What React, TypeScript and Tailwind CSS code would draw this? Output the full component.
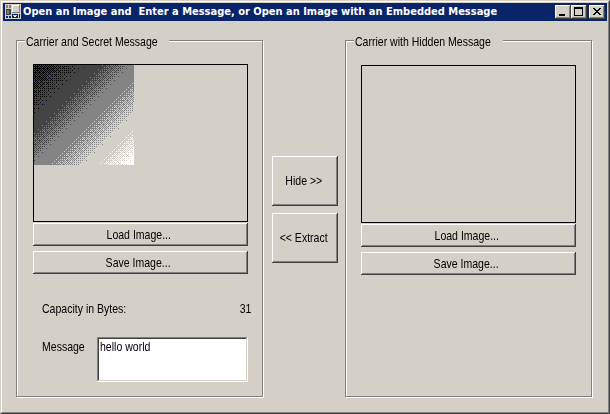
import { useEffect, useRef, type ReactNode } from 'react';

const RAISED =
  'flex shrink-0 items-center justify-center bg-[#d4d0c8] text-black shadow-[inset_-1px_-1px_0_#404040,inset_1px_1px_0_#ffffff,inset_-2px_-2px_0_#808080]';

const BAYER = [
  [0, 32, 8, 40, 2, 34, 10, 42],
  [48, 16, 56, 24, 50, 18, 58, 26],
  [12, 44, 4, 36, 14, 46, 6, 38],
  [60, 28, 52, 20, 62, 30, 54, 22],
  [3, 35, 11, 43, 1, 33, 9, 41],
  [51, 19, 59, 27, 49, 17, 57, 25],
  [15, 47, 7, 39, 13, 45, 5, 37],
  [63, 31, 55, 23, 61, 29, 53, 21],
];

const SHADES = ['#000000', '#444444', '#848484', '#d4d0c8', '#ffffff'];

// Distance along the diagonal where each blend to the next shade begins and ends.
const BLENDS = [
  [-14, 50],
  [66, 97],
  [112, 149],
  [161, 192],
];

const BLUE_DOTS = [
  [26, 0], [40, 0], [50, 2], [44, 6], [36, 6], [16, 11], [0, 15], [36, 14],
  [28, 18], [20, 22], [0, 26], [5, 34], [10, 39], [1, 48],
];

function GradientImage() {
  const ref = useRef<HTMLCanvasElement>(null);
  useEffect(() => {
    const ctx = ref.current?.getContext('2d');
    if (!ctx) return;
    for (let y = 0; y < 100; y++) {
      for (let x = 0; x < 100; x++) {
        const t = x + y;
        const threshold = (BAYER[y % 8][x % 8] + 0.5) / 64;
        let shade = 0;
        BLENDS.forEach(([from, to]) => {
          if ((t - from) / (to - from) > threshold) shade++;
        });
        ctx.fillStyle = SHADES[shade];
        ctx.fillRect(x, y, 1, 1);
      }
    }
    ctx.fillStyle = '#102a80';
    BLUE_DOTS.forEach(([x, y]) => ctx.fillRect(x, y, 1, 1));
  }, []);
  return <canvas ref={ref} width={100} height={100} className="block h-[100px] w-[100px]" />;
}

// Condensed face for the dialog's labels.
function Label({ children, origin = 'origin-left' }: { children: ReactNode; origin?: string }) {
  return <span className={`inline-block scale-x-[0.81] whitespace-nowrap ${origin}`}>{children}</span>;
}

function GroupBox({ children }: { children: ReactNode }) {
  return (
    <section className="flex h-[357px] w-[247px] shrink-0 flex-col border border-[#808080] shadow-[1px_1px_0_#ffffff,inset_1px_1px_0_#ffffff]">
      {children}
    </section>
  );
}

function AppIcon() {
  return (
    <svg width="16" height="15" viewBox="0 0 16 15" shapeRendering="crispEdges" className="shrink-0">
      <rect width="16" height="15" fill="#d4d0c8" />
      <rect x="1" y="1" width="2" height="3" fill="#808080" />
      <rect x="4" y="1" width="2" height="3" fill="#808080" />
      <rect x="1" y="5" width="5" height="6" fill="#404040" />
      <rect x="2" y="6" width="2" height="4" fill="#808080" />
      <rect x="7" y="1" width="8" height="8" fill="#808080" />
      <rect x="7" y="1" width="7" height="7" fill="#ffffff" />
      <rect x="8" y="2" width="6" height="6" fill="#d4d0c8" />
      <rect x="1" y="12" width="2" height="2" fill="#0a246a" />
      <rect x="4" y="12" width="2" height="2" fill="#0a246a" />
      <rect x="7" y="10" width="6" height="4" fill="#0a246a" />
      <rect x="8" y="11" width="4" height="1" fill="#d4d0c8" />
      <rect x="9" y="12" width="2" height="1" fill="#ffffff" />
      <rect x="14" y="10" width="1" height="4" fill="#0a246a" />
    </svg>
  );
}

function TitleBar() {
  return (
    <header className="flex h-[18px] shrink-0 items-start bg-[#0a246a] pr-[2px] pl-[2px] pt-px">
      <AppIcon />
      <h1 className="ml-[2px] h-4 whitespace-pre font-['DejaVu_Sans_Condensed','DejaVu_Sans',sans-serif] text-[11px] leading-4 font-bold text-white">
        {'Open an Image and  Enter a Message, or Open an Image with an Embedded Message'}
      </h1>
      <div className="mt-px ml-auto flex">
        <button className={`${RAISED} h-[14px] w-4`} aria-label="Minimize">
          <svg width="16" height="14" shapeRendering="crispEdges">
            <path d="M4 9h6v2H4z" />
          </svg>
        </button>
        <button className={`${RAISED} h-[14px] w-4`} aria-label="Maximize">
          <svg width="16" height="14" shapeRendering="crispEdges">
            <path fillRule="evenodd" d="M3 2h9v9H3zM4 4v6h7V4z" />
          </svg>
        </button>
        <button className={`${RAISED} ml-[2px] h-[14px] w-4`} aria-label="Close">
          <svg width="16" height="14" shapeRendering="crispEdges">
            <path d="M4 3h2v1h1v1h2V4h1V3h2v1h-1v1h-1v1H9v1h1v1h1v1h1v1h-2V9H9V8H7v1H6v1H4V9h1V8h1V7h1V6H6V5H5V4H4z" />
          </svg>
        </button>
      </div>
    </header>
  );
}

export default function App() {
  return (
    <div className="h-[414px] w-[610px] overflow-hidden border border-t-[#d4d0c8] border-r-[#404040] border-b-[#404040] border-l-[#d4d0c8] bg-[#d4d0c8] font-['Liberation_Sans',sans-serif] text-[13px] leading-[14px] text-black">
      <div className="flex h-full flex-col border border-t-white border-r-[#808080] border-b-[#808080] border-l-white p-px">
        <TitleBar />
        <main className="flex pt-[19px] pl-[13px]">
          <GroupBox>
            <h2 className="-mt-[6px] ml-2 h-[14px] w-[144px] bg-[#d4d0c8] pl-px">
              <Label>Carrier and Secret Message</Label>
            </h2>
            <div className="mt-[15px] ml-4 h-[158px] w-[215px] shrink-0 border border-black">
              <GradientImage />
            </div>
            <button className={`${RAISED} mt-px ml-4 h-[23px] w-[215px] pt-px pr-1`}>
              <Label origin="origin-center">Load Image...</Label>
            </button>
            <button className={`${RAISED} mt-[5px] ml-4 h-[23px] w-[215px] pt-px pr-1`}>
              <Label origin="origin-center">Save Image...</Label>
            </button>
            <div className="mt-7 mr-[11px] ml-[25px] flex justify-between">
              <Label>Capacity in Bytes:</Label>
              <Label origin="origin-right">31</Label>
            </div>
            <div className="mt-[21px] ml-[25px] flex">
              <div className="mt-[3px] w-[55px] shrink-0">
                <Label>Message</Label>
              </div>
              <div className="h-[45px] w-[151px] shrink-0 bg-white px-[3px] pt-[3px] shadow-[inset_-1px_-1px_0_#ffffff,inset_1px_1px_0_#808080,inset_-2px_-2px_0_#d4d0c8,inset_2px_2px_0_#404040]">
                <Label>hello world</Label>
              </div>
            </div>
          </GroupBox>
          <div className="mt-[116px] ml-[9px] flex w-[66px] shrink-0 flex-col gap-[7px]">
            <button className={`${RAISED} h-[50px] w-[66px] pr-[3px]`}>
              <Label origin="origin-center">Hide &gt;&gt;</Label>
            </button>
            <button className={`${RAISED} h-[50px] w-[66px] pr-[3px]`}>
              <Label origin="origin-center">&lt;&lt; Extract</Label>
            </button>
          </div>
          <div className="ml-[7px]">
            <GroupBox>
              <h2 className="-mt-[6px] ml-2 h-[14px] w-[149px] bg-[#d4d0c8] pl-px">
                <Label>Carrier with Hidden Message</Label>
              </h2>
              <div className="mt-4 ml-[15px] h-[158px] w-[215px] shrink-0 border border-black" />
              <button className={`${RAISED} mt-px ml-[15px] h-[23px] w-[215px] pt-px pr-1`}>
                <Label origin="origin-center">Load Image...</Label>
              </button>
              <button className={`${RAISED} mt-[5px] ml-[15px] h-[23px] w-[215px] pt-px pr-1`}>
                <Label origin="origin-center">Save Image...</Label>
              </button>
            </GroupBox>
          </div>
        </main>
      </div>
    </div>
  );
}
